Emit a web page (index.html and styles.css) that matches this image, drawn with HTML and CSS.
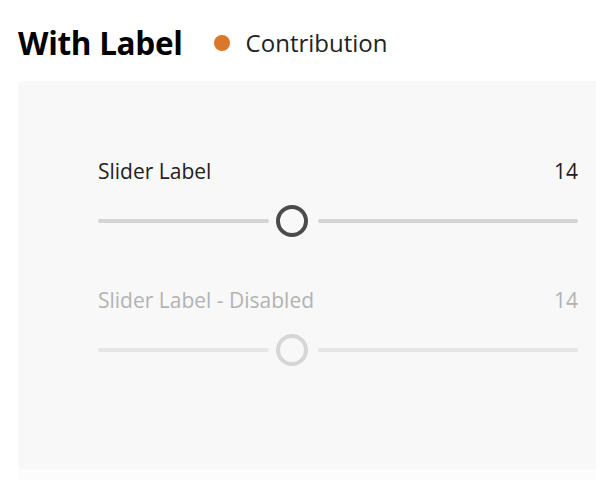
FILE: index.html
```html
<!DOCTYPE html>
<html>
<head>
<meta charset="utf-8">
<link rel="stylesheet" href="styles.css">
</head>
<body>
  <header class="heading">
    <h1 class="title">With Label</h1>
    <span class="status"><span class="dot"></span>Contribution</span>
  </header>
  <section class="panel">
    <div class="slider">
      <div class="slider-top">
        <span class="slider-label">Slider Label</span>
        <span class="slider-value">14</span>
      </div>
      <div class="slider-track">
        <span class="track track-left"></span>
        <span class="thumb"></span>
        <span class="track track-right"></span>
      </div>
    </div>
    <div class="slider disabled">
      <div class="slider-top">
        <span class="slider-label">Slider Label - Disabled</span>
        <span class="slider-value">14</span>
      </div>
      <div class="slider-track">
        <span class="track track-left"></span>
        <span class="thumb"></span>
        <span class="track track-right"></span>
      </div>
    </div>
  </section>
  <div class="next-panel"></div>
</body>
</html>
```
FILE: styles.css
```css
html, body {
  margin: 0;
  padding: 0;
  background: #ffffff;
  overflow: hidden;
  width: 596px;
  height: 480px;
}
body {
  font-family: "Open Sans", "Noto Sans", sans-serif;
  color: #222222;
}
.heading {
  display: flex;
  align-items: center;
  padding: 23px 0 0 18px;
  height: 40px;
}
.title {
  margin: 0;
  font-size: 31.5px;
  font-weight: 700;
  letter-spacing: -0.3px;
  color: #000000;
  line-height: 40px;
}
.status {
  display: flex;
  align-items: center;
  margin-left: 31px;
  font-size: 24px;
  color: #222222;
  line-height: 40px;
}
.dot {
  width: 16px;
  height: 16px;
  border-radius: 50%;
  background: #d9772b;
  margin-right: 16px;
}
.panel {
  margin: 18px 0 0 18px;
  width: 620px;
  height: 388px;
  box-sizing: border-box;
  background: #f8f8f8;
  border-radius: 4px;
  padding: 76px 0 0 80px;
}
.slider {
  width: 480px;
  margin-bottom: 47px;
}
.slider-top {
  display: flex;
  justify-content: space-between;
  font-size: 21px;
  line-height: 28px;
  color: #222222;
}
.slider-track {
  display: flex;
  align-items: center;
  height: 36px;
  margin-top: 18px;
}
.track {
  height: 4px;
  border-radius: 2px;
  background: #d4d4d4;
}
.track-left {
  width: 171px;
  margin-right: 7px;
}
.track-right {
  flex: 1;
  margin-left: 10px;
}
.thumb {
  width: 32px;
  height: 32px;
  box-sizing: border-box;
  border: 4px solid #4b4b4b;
  border-radius: 50%;
  background: #f8f8f8;
}
.disabled .slider-top {
  color: #b3b3b3;
}
.disabled .track {
  background: #e6e6e6;
}
.disabled .thumb {
  border-color: #d6d6d6;
}
.next-panel {
  margin-left: 18px;
  height: 20px;
  background: #fcfcfc;
}
```
